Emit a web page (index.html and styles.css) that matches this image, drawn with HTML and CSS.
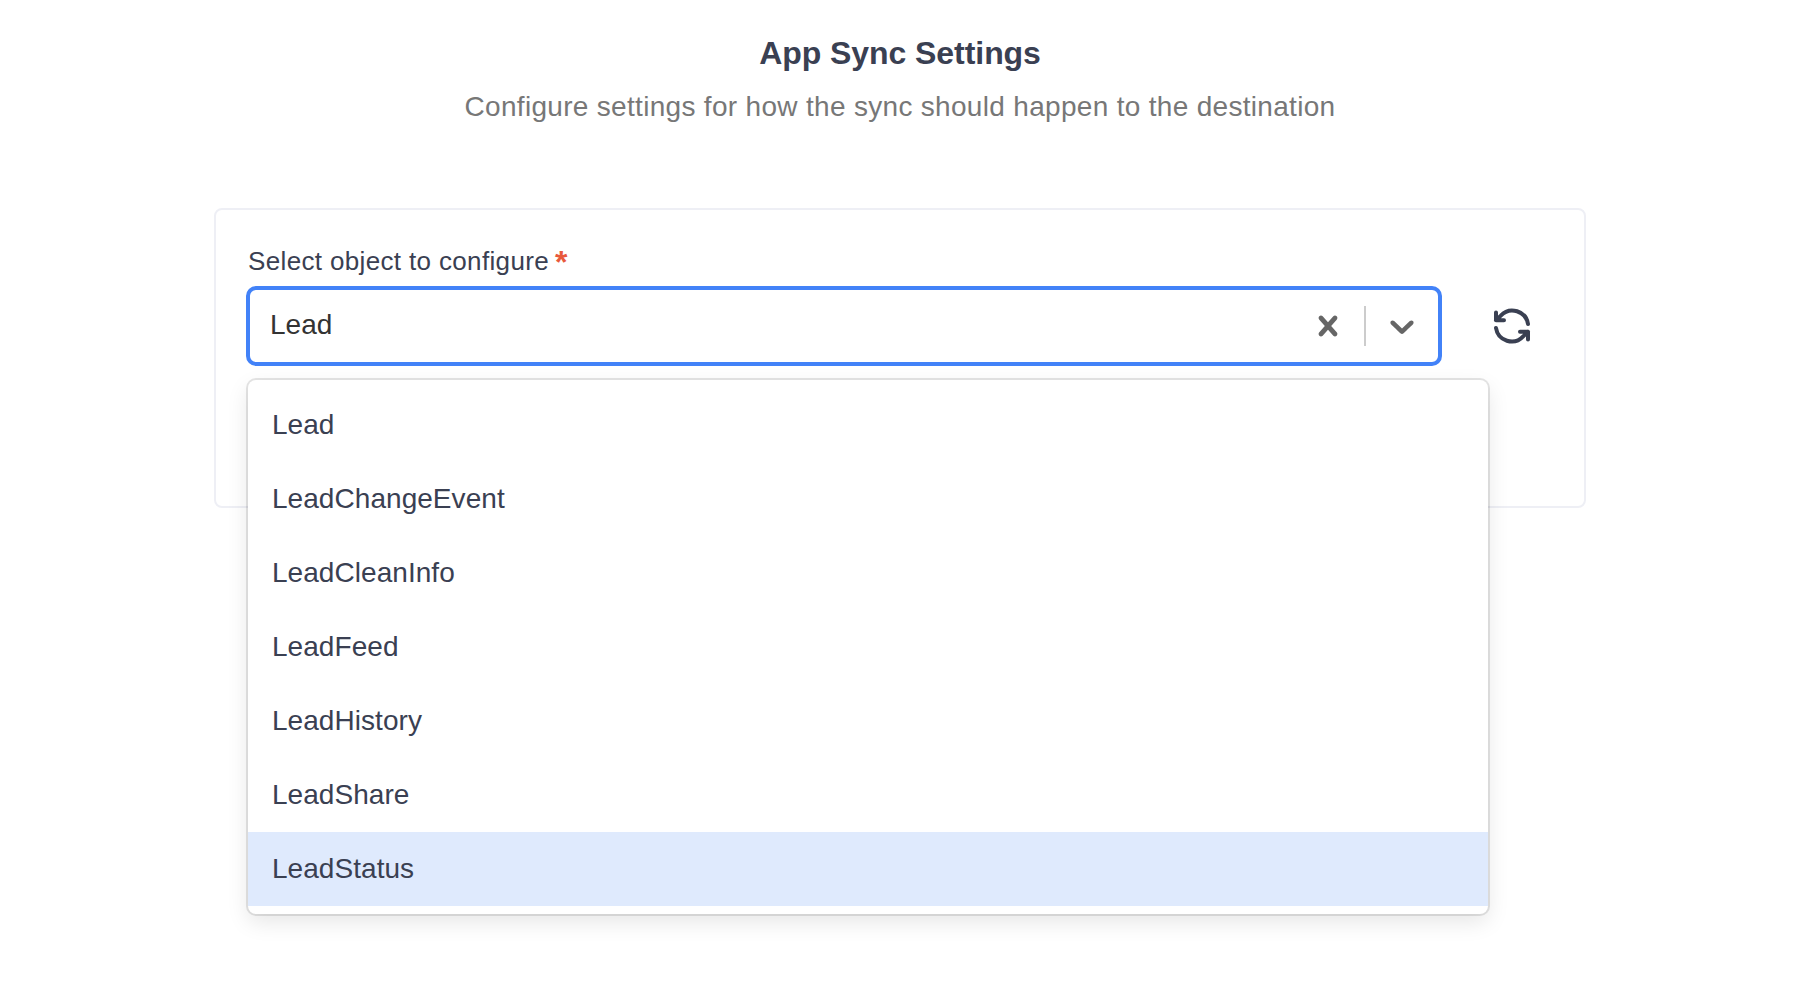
FILE: index.html
```html
<!DOCTYPE html>
<html lang="en">
<head>
<meta charset="utf-8">
<title>App Sync Settings</title>
<link rel="stylesheet" href="styles.css">
</head>
<body>
<main class="page">
  <header class="heading">
    <h1 class="title">App Sync Settings</h1>
    <p class="subtitle">Configure settings for how the sync should happen to the destination</p>
  </header>
  <section class="card">
    <label class="label"><span class="label-text">Select object to configure</span><span class="required">*</span></label>
    <div class="row">
      <div class="select">
        <span class="value">Lead</span>
        <svg class="indicator" viewBox="0 0 20 20"><path d="M14.348 14.849c-0.469 0.469-1.229 0.469-1.697 0l-2.651-3.030-2.651 3.029c-0.469 0.469-1.229 0.469-1.697 0-0.469-0.469-0.469-1.229 0-1.697l2.758-3.15-2.759-3.152c-0.469-0.469-0.469-1.228 0-1.697s1.228-0.469 1.697 0l2.652 3.031 2.651-3.031c0.469-0.469 1.228-0.469 1.697 0s0.469 1.229 0 1.697l-2.758 3.152 2.758 3.15c0.469 0.469 0.469 1.229 0 1.698z"/></svg>
        <span class="separator"></span>
        <svg class="indicator" viewBox="0 0 20 20"><path d="M4.516 7.548c0.436-0.446 1.043-0.481 1.576 0l3.908 3.747 3.908-3.747c0.533-0.481 1.141-0.446 1.574 0 0.436 0.445 0.408 1.197 0 1.615-0.406 0.418-4.695 4.502-4.695 4.502-0.217 0.223-0.502 0.335-0.787 0.335s-0.57-0.112-0.789-0.335c0 0-4.287-4.084-4.695-4.502s-0.436-1.17 0-1.615z"/></svg>
      </div>
      <svg class="refresh" viewBox="0 0 40 40"><path d="M4 6.5v7.7h8M4 14.2L8.8 9.6A15.8 15.8 0 0 1 36 18M36 33.5v-7.7h-8M36 25.8L31.2 30.4A15.8 15.8 0 0 1 4 22"/></svg>
      <ul class="menu">
        <li class="option">Lead</li>
        <li class="option">LeadChangeEvent</li>
        <li class="option">LeadCleanInfo</li>
        <li class="option">LeadFeed</li>
        <li class="option">LeadHistory</li>
        <li class="option">LeadShare</li>
        <li class="option focused">LeadStatus</li>
      </ul>
    </div>
  </section>
</main>
</body>
</html>
```
FILE: styles.css
```css
* { box-sizing: border-box; }
body {
  margin: 0;
  height: 990px;
  overflow: hidden;
  background: #fff;
  color: #3a4052;
  font-family: "Liberation Sans", Arial, sans-serif;
}
.page {
  display: flex;
  flex-direction: column;
  align-items: center;
  padding: 33px 0 0 2px;
}
.heading { text-align: center; }
.title {
  margin: 0;
  font-size: 32px;
  line-height: 40px;
  letter-spacing: -.06px;
}
.subtitle {
  margin: 14px 0 0;
  font-size: 28px;
  line-height: 40px;
  letter-spacing: .31px;
  color: #777;
}
.card {
  width: 1372px;
  height: 300px;
  margin-top: 81px;
  padding: 34px 30px 0;
  border: 2px solid #eeeff5;
  border-radius: 8px;
}
.label {
  display: flex;
  height: 42px;
  padding-left: 2px;
  font-size: 26px;
  line-height: 34px;
}
.label-text { letter-spacing: .35px; }
.required {
  margin-left: 6px;
  padding-top: 1px;
  font-size: 32px;
  font-weight: bold;
  color: #e8593c;
}
.row {
  position: relative;
  display: flex;
  align-items: center;
  gap: 50px;
}
.select {
  display: flex;
  align-items: center;
  width: 1196px;
  height: 80px;
  padding: 0 16px 0 20px;
  border: 4px solid #4282f8;
  border-radius: 10px;
}
.value {
  flex: 1;
  font-size: 28px;
  line-height: 36px;
  padding-bottom: 3px;
  color: #333;
}
.indicator { width: 40px; height: 40px; fill: #666; }
.separator {
  width: 2px;
  height: 40px;
  margin: 0 16px;
  background: #ccc;
}
.refresh {
  width: 40px;
  height: 40px;
  fill: none;
  stroke: #3a4052;
  stroke-width: 4;
  stroke-linecap: round;
  stroke-linejoin: round;
}
.menu {
  position: absolute;
  top: 94px;
  left: 2px;
  width: 1240px;
  margin: 0;
  padding: 8px 0;
  list-style: none;
  background: #fff;
  border-radius: 8px;
  box-shadow: 0 0 0 2px rgba(0, 0, 0, .1), 0 8px 22px rgba(0, 0, 0, .1);
}
.option {
  height: 74px;
  padding: 0 24px;
  font-size: 28px;
  line-height: 74px;
  letter-spacing: .05px;
}
.focused { background: #dfeafd; }
```
